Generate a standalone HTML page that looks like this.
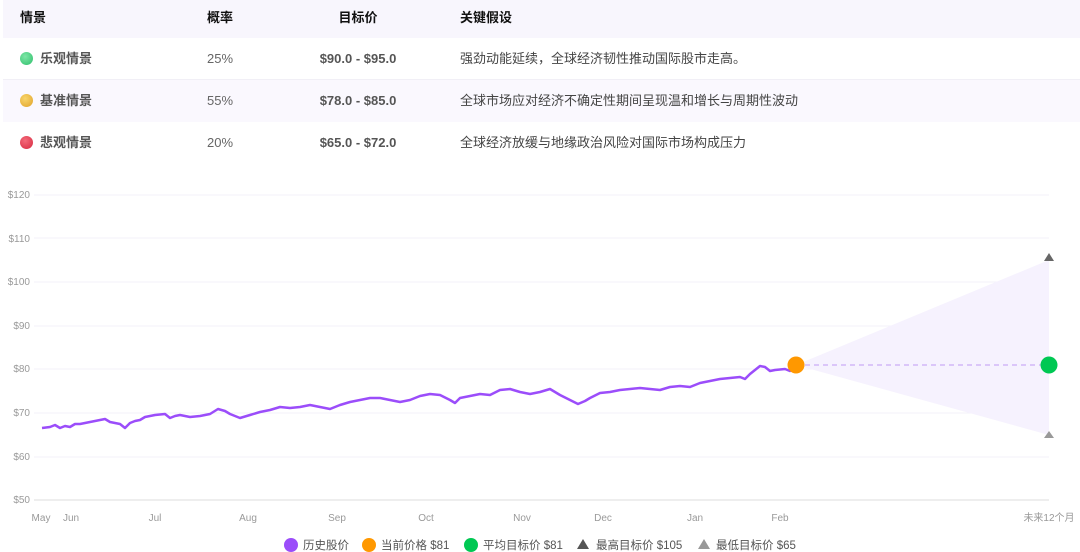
<!DOCTYPE html>
<html><head><meta charset="utf-8"><style>
*{margin:0;padding:0;box-sizing:border-box}
body{width:1080px;height:552px;background:#fff;font-family:"Liberation Sans","Noto Sans CJK SC",sans-serif;position:relative;overflow:hidden;color:#222}
.row{position:absolute;left:3px;width:1077px;height:42px;font-size:13px}
.row div{position:absolute;top:0;line-height:42px;white-space:nowrap}
.h{top:0;height:38px;background:#f8f6fd;font-weight:bold;color:#111}
.h div{line-height:36px}
.dot{display:inline-block;width:13px;height:13px;border-radius:50%;vertical-align:-2px;margin-right:7px}
.name{left:17px;font-weight:bold;color:#555}
.p{left:204px;color:#666}
.t{left:310px;width:90px;text-align:center;font-weight:bold;color:#555}
.a{left:457px;color:#444}
</style></head><body>
<div class="row h"><div style="left:17px">情景</div><div style="left:204px">概率</div><div style="left:310px;width:90px;text-align:center">目标价</div><div style="left:457px">关键假设</div></div>
<div class="row" style="top:38px;border-bottom:1px solid #f1eff6"><div class="name"><span class="dot" style="background:radial-gradient(circle at 40% 35%,#7ee6a6,#2fbf6c)"></span>乐观情景</div><div class="p">25%</div><div class="t">$90.0 - $95.0</div><div class="a">强劲动能延续，全球经济韧性推动国际股市走高。</div></div>
<div class="row" style="top:80px;background:#faf8fe"><div class="name"><span class="dot" style="background:radial-gradient(circle at 40% 35%,#f8d56a,#e0a22a)"></span>基准情景</div><div class="p">55%</div><div class="t">$78.0 - $85.0</div><div class="a">全球市场应对经济不确定性期间呈现温和增长与周期性波动</div></div>
<div class="row" style="top:122px"><div class="name"><span class="dot" style="background:radial-gradient(circle at 40% 35%,#f46a7a,#d62a40)"></span>悲观情景</div><div class="p">20%</div><div class="t">$65.0 - $72.0</div><div class="a">全球经济放缓与地缘政治风险对国际市场构成压力</div></div>
<svg width="1080" height="552" style="position:absolute;left:0;top:0" font-family="Liberation Sans,Noto Sans CJK SC,sans-serif">
<g stroke="#f3f1fa" stroke-width="1">
<line x1="34" y1="195" x2="1049" y2="195"/><line x1="34" y1="238" x2="1049" y2="238"/><line x1="34" y1="282" x2="1049" y2="282"/><line x1="34" y1="326" x2="1049" y2="326"/><line x1="34" y1="369" x2="1049" y2="369"/><line x1="34" y1="413" x2="1049" y2="413"/><line x1="34" y1="457" x2="1049" y2="457"/>
</g>
<line x1="34" y1="500" x2="1049" y2="500" stroke="#ddd"/>
<g font-size="10" fill="#999" text-anchor="end">
<text x="30" y="198">$120</text><text x="30" y="242">$110</text><text x="30" y="285">$100</text><text x="30" y="329">$90</text><text x="30" y="372">$80</text><text x="30" y="416">$70</text><text x="30" y="460">$60</text><text x="30" y="503">$50</text>
</g>
<g font-size="10" fill="#999" text-anchor="middle">
<text x="41" y="521">May</text><text x="71" y="521">Jun</text><text x="155" y="521">Jul</text><text x="248" y="521">Aug</text><text x="337" y="521">Sep</text><text x="426" y="521">Oct</text><text x="522" y="521">Nov</text><text x="603" y="521">Dec</text><text x="695" y="521">Jan</text><text x="780" y="521">Feb</text><text x="1049" y="521">未来12个月</text>
</g>
<polygon points="796,365 1049,260 1049,435" fill="#f6f2fe"/>
<line x1="796" y1="365" x2="1049" y2="365" stroke="#d2b8f7" stroke-width="1.5" stroke-dasharray="5,4"/>
<polyline fill="none" stroke="#9b4dfa" stroke-width="2.5" stroke-linejoin="round" points="42,428 50,427 55,425 60,428 65,426 70,427 75,424 80,424 90,422 100,420 105,419 110,422 115,423 120,424 125,428 130,423 135,421 140,420 145,417 155,415 165,414 170,418 175,416 180,415 190,417 200,416 210,414 218,409 225,411 230,414 240,418 250,415 260,412 270,410 280,407 290,408 300,407 310,405 320,407 330,409 340,405 350,402 360,400 370,398 380,398 390,400 400,402 410,400 420,396 430,394 440,395 450,400 455,403 460,398 470,396 480,394 490,395 500,390 510,389 520,392 530,394 540,392 550,389 560,395 570,400 578,404 585,401 590,398 600,393 610,392 620,390 630,389 640,388 650,389 660,390 670,387 680,386 690,387 700,383 710,381 720,379 730,378 740,377 745,379 750,374 760,366 765,367 770,371 775,370 785,369 790,371 795,366"/>
<circle cx="796" cy="365" r="8.5" fill="#ff9800"/>
<circle cx="1049" cy="365" r="8.5" fill="#00c853"/>
<polygon points="1049,253 1054,261 1044,261" fill="#666"/>
<polygon points="1049,431 1054,438 1044,438" fill="#999"/>
<g font-size="11.5" fill="#555">
<circle cx="291" cy="545" r="7" fill="#9b4dfa"/><text x="303" y="549">历史股价</text>
<circle cx="369" cy="545" r="7" fill="#ff9800"/><text x="381" y="549">当前价格 $81</text>
<circle cx="471" cy="545" r="7" fill="#00c853"/><text x="483" y="549">平均目标价 $81</text>
<polygon points="583,539 589,549 577,549" fill="#555"/><text x="596" y="549">最高目标价 $105</text>
<polygon points="704,539 710,549 698,549" fill="#999"/><text x="716" y="549">最低目标价 $65</text>
</g>
</svg>
</body></html>
